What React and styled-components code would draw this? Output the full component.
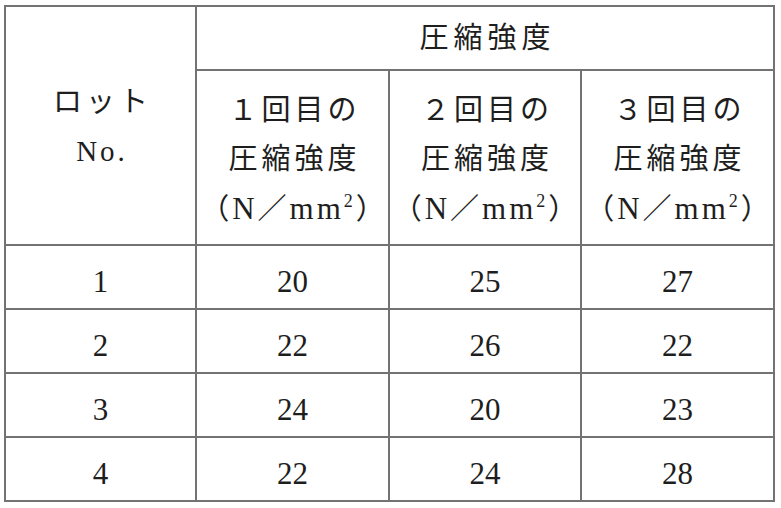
import React from "react";
import styled, { createGlobalStyle } from "styled-components";

const GlobalStyle = createGlobalStyle`
  html, body {
    margin: 0;
    padding: 0;
    background: #fff;
  }
  body {
    font-family: "Liberation Serif", "Noto Sans CJK JP", serif;
    color: #1e1e1e;
  }
`;

const Page = styled.div`
  padding: 5px 0 0 4px;
`;

const Grid = styled.div`
  display: grid;
  grid-template-columns: 189px 191px 190px 191px;
  grid-template-rows: 62px 173px 62px 62px 62px 62px;
  gap: 2px;
  padding: 2px;
  width: max-content;
  background: #737373;
`;

const Cell = styled.div`
  background: #fff;
  display: flex;
  flex-direction: column;
  align-items: center;
  justify-content: center;
  grid-column: ${(p) => p.$col || "auto"};
  grid-row: ${(p) => p.$row || "auto"};
  padding-top: ${(p) => p.$offset || 0}px;
  box-sizing: border-box;
`;

const Line = styled.div`
  font-family: "Liberation Serif", "Noto Sans CJK JP", serif;
  font-size: 29px;
  line-height: 49px;
  letter-spacing: ${(p) => p.$spacing ?? 4}px;
  margin-right: ${(p) => -(p.$spacing ?? 4)}px;
  white-space: nowrap;
`;

const Unit = styled.span`
  font-size: 31px;
`;

const Sup = styled.sup`
  font-size: 18px;
  line-height: 0;
  vertical-align: 12px;
`;

const Num = styled.span`
  font-family: "Liberation Serif", serif;
  font-size: 31px;
  line-height: 1;
`;

const rows = [
  ["1", "20", "25", "27"],
  ["2", "22", "26", "22"],
  ["3", "24", "20", "23"],
  ["4", "22", "24", "28"],
];

const trials = ["１", "２", "３"];

export default function App() {
  return (
    <Page>
      <GlobalStyle />
      <Grid>
        <Cell $col="1" $row="1 / span 2" $offset={2}>
          <Line $spacing={4}>ロット</Line>
          <Line $spacing={3}>No.</Line>
        </Cell>
        <Cell $col="2 / span 3" $row="1">
          <Line $spacing={5}>圧縮強度</Line>
        </Cell>
        {trials.map((t, i) => (
          <Cell key={t} $col={String(i + 2)} $row="2" $offset={4}>
            <Line>{t}回目の</Line>
            <Line>圧縮強度</Line>
            <Line $spacing={3}>
              （<Unit>N</Unit>／<Unit>mm</Unit>
              <Sup>2</Sup>）
            </Line>
          </Cell>
        ))}
        {rows.map((r) =>
          r.map((v, j) => (
            <Cell key={r[0] + "-" + j} $offset={9}>
              <Num>{v}</Num>
            </Cell>
          ))
        )}
      </Grid>
    </Page>
  );
}
